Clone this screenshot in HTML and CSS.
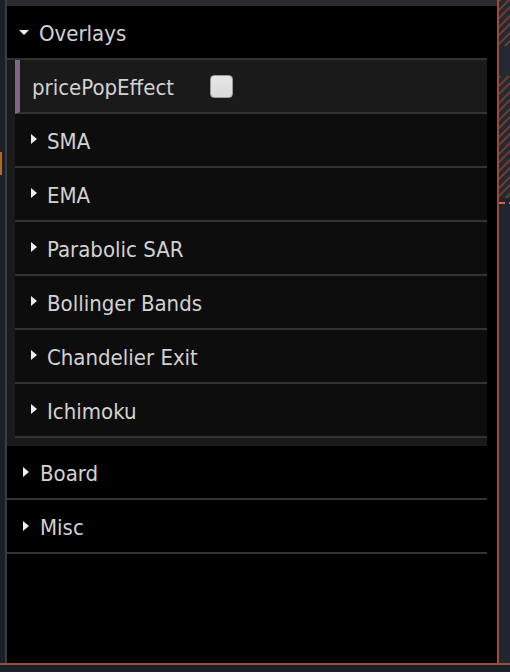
FILE: index.html
```html
<!DOCTYPE html>
<html>
<head>
<meta charset="utf-8">
<link rel="stylesheet" href="styles.css">
</head>
<body>
<div class="screen">
  <div class="main">
    <div class="leftstrip"><div class="mark"></div></div>
    <div class="leftline"></div>
    <div class="panel">
      <div class="topbar"></div>
      <div class="gui">
        <ul class="list">
          <li class="folder">
            <div class="title"><span class="tri-down"></span>Overlays</div>
            <ul class="children">
              <li class="prop"><span class="name">pricePopEffect</span><span class="check"></span></li>
              <li class="sub"><span class="tri-right"></span>SMA</li>
              <li class="sub"><span class="tri-right"></span>EMA</li>
              <li class="sub"><span class="tri-right"></span>Parabolic SAR</li>
              <li class="sub"><span class="tri-right"></span>Bollinger Bands</li>
              <li class="sub"><span class="tri-right"></span>Chandelier Exit</li>
              <li class="sub"><span class="tri-right"></span>Ichimoku</li>
            </ul>
          </li>
          <li class="title"><span class="tri-right"></span>Board</li>
          <li class="title"><span class="tri-right"></span>Misc</li>
        </ul>
      </div>
    </div>
    <div class="rightline"></div>
    <div class="rightstrip">
      <div class="hatch h1"></div>
      <div class="plain"></div>
      <div class="hatch h2"></div>
      <div class="dash"><span class="d1"></span><span class="d2"></span></div>
    </div>
  </div>
  <div class="bottomline"></div>
  <div class="bottom"></div>
</div>
</body>
</html>
```
FILE: styles.css
```css
html, body {
  margin: 0;
  padding: 0;
  background: #1b1f28;
}
.screen {
  width: 510px;
  height: 672px;
  overflow: hidden;
  font-family: "DejaVu Sans Condensed", "DejaVu Sans", sans-serif;
  font-stretch: condensed;
  font-size: 22px;
  color: #d2d2d2;
}
.main {
  display: flex;
  height: 663px;
}
.leftstrip {
  width: 5px;
  background: #1b1f28;
  padding-top: 152px;
  box-sizing: border-box;
}
.mark {
  width: 2px;
  height: 23px;
  background: #b8691f;
}
.leftline {
  width: 2px;
  background: #3a3c42;
}
.panel {
  width: 490px;
  display: flex;
  flex-direction: column;
  background: #000;
}
.topbar {
  height: 6px;
  background: #2a2b2f;
}
.gui {
  flex: 1;
  padding-right: 10px;
}
ul {
  list-style: none;
  margin: 0;
  padding: 0;
}
.title {
  height: 50px;
  padding-top: 2px;
  border-bottom: 2px solid #323232;
  display: flex;
  align-items: center;
  padding-left: 16px;
  background: #000;
  white-space: nowrap;
}
.children {
  background: #1a1a1a;
  padding-left: 8px;
  padding-bottom: 8px;
}
.prop {
  height: 50px;
  padding-top: 2px;
  border-bottom: 2px solid #323232;
  border-left: 5px solid #806787;
  background: #1a1a1a;
  display: flex;
  align-items: center;
}
.name {
  width: 190px;
  padding-left: 12px;
  box-sizing: border-box;
  white-space: nowrap;
}
.check {
  width: 23px;
  height: 23px;
  box-sizing: border-box;
  border: 1px solid #9a9a9a;
  border-radius: 4px;
  background: linear-gradient(#e6e6e6, #dadada);
  margin-bottom: 2px;
}
.sub {
  height: 50px;
  padding-top: 2px;
  border-bottom: 2px solid #323232;
  background: #0d0d0d;
  display: flex;
  align-items: center;
  padding-left: 16px;
  white-space: nowrap;
}
.tri-right {
  width: 0;
  height: 0;
  border-left: 6px solid #eee;
  border-top: 5px solid transparent;
  border-bottom: 5px solid transparent;
  margin-right: 10px;
  margin-bottom: 4px;
}
.title .tri-right {
  margin-right: 11px;
  margin-bottom: 3px;
}
.tri-down {
  width: 0;
  height: 0;
  border-top: 5px solid #eee;
  border-left: 5px solid transparent;
  border-right: 5px solid transparent;
  margin-left: -4px;
  margin-right: 10px;
  margin-bottom: 2px;
}
.rightline {
  width: 2px;
  background: #9c4a36;
}
.rightstrip {
  width: 11px;
  background: #20262e;
  display: flex;
  flex-direction: column;
}
.hatch {
  background: repeating-linear-gradient(135deg, #6a3a32 0 2px, #232a32 2px 6px);
}
.h1 { height: 46px; }
.plain {
  height: 30px;
  background: #232a32;
}
.h2 { height: 122px; }
.dash {
  display: flex;
  margin-top: 4px;
  height: 2px;
}
.d1 {
  width: 6px;
  background: #e0603a;
}
.d2 {
  width: 1px;
  margin-left: 4px;
  background: #e0603a;
}
.bottomline {
  height: 2px;
  background: #9c4a36;
}
.bottom {
  height: 7px;
  background: #1b1f28;
}
```
